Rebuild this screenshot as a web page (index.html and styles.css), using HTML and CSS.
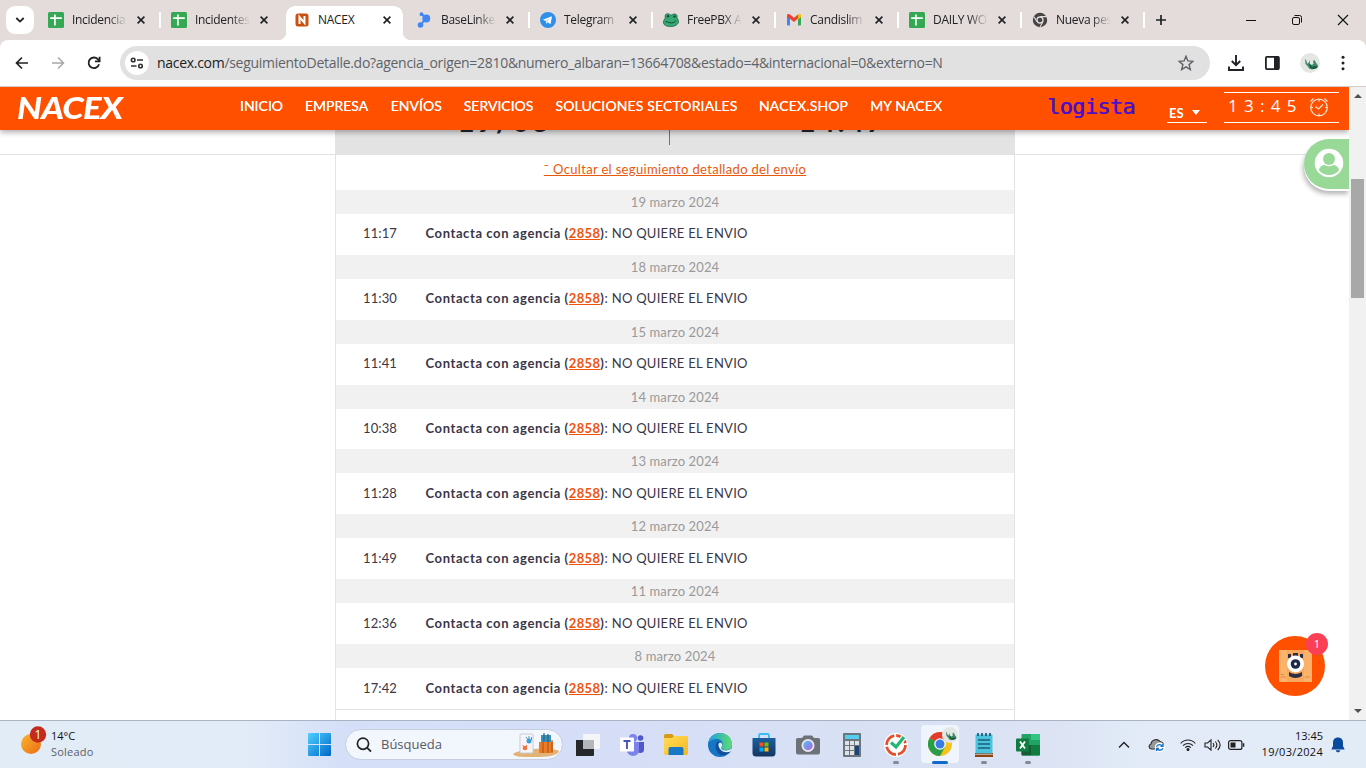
FILE: index.html
```html
<!DOCTYPE html>
<html lang="es">
<head>
<meta charset="utf-8">
<title>NACEX</title>
<link rel="stylesheet" href="styles.css">
</head>
<body>
<svg class="defs" width="0" height="0">
  <defs>
    <linearGradient id="gWin" x1="0" y1="0" x2="1" y2="1"><stop offset="0" stop-color="#4fd0ff"/><stop offset="1" stop-color="#0067c8"/></linearGradient>
    <linearGradient id="gSun" x1="0" y1="0" x2="1" y2="1"><stop offset="0" stop-color="#f7b733"/><stop offset="1" stop-color="#ee6a10"/></linearGradient>
    <linearGradient id="gEdge" x1="0" y1="0" x2="1" y2="0"><stop offset="0" stop-color="#1c9de0"/><stop offset="1" stop-color="#5fdc72"/></linearGradient>
    <linearGradient id="gFold" x1="0" y1="0" x2="1" y2="1"><stop offset="0" stop-color="#ffdc5c"/><stop offset="1" stop-color="#f6b91c"/></linearGradient>
    <linearGradient id="gStore" x1="0" y1="0" x2="0" y2="1"><stop offset="0" stop-color="#1c5fa0"/><stop offset="1" stop-color="#153560"/></linearGradient>
    <linearGradient id="gLens" x1="0" y1="0" x2="1" y2="1"><stop offset="0" stop-color="#4cc7f5"/><stop offset="1" stop-color="#b65be0"/></linearGradient>
    <symbol id="sheet" viewBox="0 0 16 16"><rect width="16" height="16" rx="1.5" fill="#34a853"/><path d="M2.2 6.2h11.6M6.9 2.5v11" stroke="#fff" stroke-width="1.7"/></symbol>
    <symbol id="close" viewBox="0 0 8 8"><path d="M.6.6l6.800 6.800M7.400.6L.6 7.400" stroke="#202124" stroke-width="1.600"/></symbol>
    <symbol id="gecko" viewBox="0 0 20 20"><circle cx="10" cy="10" r="10" fill="#e4e6e4"/><path d="M5 6l1 1 1.500 4L9 9l.5-2 .5 4 2 1 1.500-1.500L13 8l1.500-1 2 3.500 1.500 2-2 3-4 1-3-1-1.500-2.500L5.500 11z" fill="#3f8a68"/><path d="M9 11l1.500 4 2.500 1 4-1 1-2-2 .5-2-.5-2 1.500-1-2.500z" fill="#14583c"/></symbol>
  </defs>
</svg>
<div class="screen">
  <div class="tabstrip">
    <div class="tabsearch"><svg width="10" height="6" viewBox="0 0 10 6"><path d="M1.3 1l3.7 3.6L8.7 1" fill="none" stroke="#202124" stroke-width="1.8"/></svg></div>
    <div class="tabs">
      <div class="tab"><svg class="fav"><use href="#sheet"/></svg><span class="tt">Incidencias</span><svg class="x"><use href="#close"/></svg></div>
      <div class="tab nosep"><svg class="fav"><use href="#sheet"/></svg><span class="tt">Incidentes</span><svg class="x"><use href="#close"/></svg></div>
      <div class="tab active nosep"><svg class="fav" viewBox="0 0 16 16"><rect x="1.500" y="1.500" width="13" height="13" rx="2.500" fill="#c9500f"/><path d="M5.500 12V5L10.500 11V4" fill="none" stroke="#fff" stroke-width="2"/></svg><span class="tt">NACEX</span><svg class="x"><use href="#close"/></svg></div>
      <div class="tab"><svg class="fav" viewBox="0 0 16 16"><g fill="#4285f4"><circle cx="4.500" cy="2.200" r="1.900"/><circle cx="9.300" cy="6.500" r="3.900"/><circle cx="3.500" cy="13" r="2.800"/></g><path d="M4.500 2l4 4-4.500 7" fill="none" stroke="#4285f4" stroke-width="1.800"/></svg><span class="tt">BaseLinker</span><svg class="x"><use href="#close"/></svg></div>
      <div class="tab"><svg class="fav" viewBox="0 0 16 16"><circle cx="8" cy="8" r="8" fill="#2f8fe8"/><path d="M2.800 7.800L12 4.200l-1.500 8-2.700-2-1.500 1.500-.4-2.600z" fill="#fff"/><path d="M6 9l4-3-3 4z" fill="#9cc8f0"/></svg><span class="tt">Telegram</span><svg class="x"><use href="#close"/></svg></div>
      <div class="tab"><svg class="fav" viewBox="0 0 16 16"><path d="M.5 10C.5 8 2 7 2.300 5.500 1.500 3 3 1.500 5 1.800 6.500 2 7 3 8 3s2-1.300 4-1c2 .3 2.500 2 2 3.500L15.500 9c.5 2-2 5.500-7.500 5.500S.5 13 .5 10z" fill="#36a873" stroke="#23674a" stroke-width=".8"/><path d="M2.500 9.500c3 .5 4 1.500 6 1.500s3-1 4.500-2.500" fill="none" stroke="#174c37" stroke-width="1"/><circle cx="5" cy="4.300" r="1.200" fill="#174c37"/><circle cx="11.500" cy="4.500" r="1.200" fill="#174c37"/></svg><span class="tt">FreePBX Ad</span><svg class="x"><use href="#close"/></svg></div>
      <div class="tab"><svg class="fav" viewBox="0 0 16 16"><path d="M1 3.500h3V13.500H2a1 1 0 0 1-1-1z" fill="#4285f4"/><path d="M12 3.500h3v9a1 1 0 0 1-1 1h-2z" fill="#34a853"/><path d="M1 3.500C1 2 3 1.600 4 2.600l4 3.200 4-3.200v4L8 10 4 6.800 1 5z" fill="#ea4335"/><path d="M12 2.600c1-1 3-.6 3 .9V5l-3 2.500z" fill="#fbbc04"/></svg><span class="tt">Candislim </span><svg class="x"><use href="#close"/></svg></div>
      <div class="tab"><svg class="fav"><use href="#sheet"/></svg><span class="tt">DAILY WORK</span><svg class="x"><use href="#close"/></svg></div>
      <div class="tab"><svg class="fav" viewBox="0 0 16 16"><circle cx="8" cy="8" r="7.200" fill="#444"/><circle cx="8" cy="8" r="3" fill="#444" stroke="#e3dcda" stroke-width="1.300"/><path d="M8 4.600h6.500M5 9.800L2 4.800M11 9.600L8 15" stroke="#e3dcda" stroke-width="1.100"/></svg><span class="tt">Nueva pestaña</span><svg class="x"><use href="#close"/></svg></div>
    </div>
    <svg class="plus" width="12" height="12" viewBox="0 0 12 12"><path d="M6 1v10M1 6h10" stroke="#202124" stroke-width="1.700"/></svg>
    <div class="winctl">
      <svg width="12" height="12" viewBox="0 0 12 12"><path d="M1 6.500h10" stroke="#111"/></svg>
      <svg width="12" height="12" viewBox="0 0 12 12" fill="none" stroke="#111"><rect x="1.500" y="3.500" width="7" height="7" rx="1.500"/><path d="M3.500 1.500h5a2 2 0 0 1 2 2v5"/></svg>
      <svg width="12" height="12" viewBox="0 0 12 12"><path d="M1 1l10 10M11 1L1 11" stroke="#111" stroke-width="1.100"/></svg>
    </div>
  </div>

  <div class="toolbar">
    <div class="nav">
      <svg width="14" height="14" viewBox="0 0 14 14" fill="none" stroke="#202124" stroke-width="1.700"><path d="M13 7H2M7 1.500L1.500 7 7 12.500"/></svg>
      <svg width="14" height="14" viewBox="0 0 14 14" fill="none" stroke="#a8a8a8" stroke-width="1.500"><path d="M1 7h11M7 1.500L12.500 7 7 12.500"/></svg>
      <svg width="14" height="14" viewBox="0 0 14 14" fill="none" stroke="#202124" stroke-width="1.800"><path d="M12 8.200A5.300 5.300 0 1 1 10.800 3.200L12.500 5"/><path d="M12.600.8V5.300H8"/></svg>
    </div>
    <div class="omni">
      <span class="site"><svg width="14" height="12" viewBox="0 0 14 12" fill="none" stroke="#303134" stroke-width="1.600"><circle cx="3.200" cy="3" r="1.800"/><path d="M7 3h6M1 9h5.500"/><circle cx="10.500" cy="9" r="1.800"/></svg></span>
      <span class="url"><b>nacex.com</b>/seguimientoDetalle.do?agencia_origen=2810&amp;numero_albaran=13664708&amp;estado=4&amp;internacional=0&amp;externo=N</span>
      <svg class="star" width="16" height="16" viewBox="0 0 16 16"><path d="M8 1.200l1.900 4.700 5 .4-3.800 3.300 1.200 5L8 11.900l-4.300 2.700 1.200-5L1.100 6.300l5-.4z" fill="none" stroke="#5f6368" stroke-width="1.400"/></svg>
    </div>
    <div class="acts">
      <svg width="16" height="16" viewBox="0 0 16 16" fill="none" stroke="#202124" stroke-width="1.900"><path d="M8 0v10M3.800 6L8 10.200 12.200 6M1 11.500V15h14v-3.500"/></svg>
      <svg width="16" height="16" viewBox="0 0 16 16"><rect x="1.900" y="1.900" width="13" height="12.200" rx="1" fill="none" stroke="#202124" stroke-width="1.800"/><path d="M10 1.500h5v13h-5z" fill="#202124"/></svg>
      <svg width="20" height="20"><use href="#gecko"/></svg>
      <svg class="dots" width="4" height="16" viewBox="0 0 4 16" fill="#202124"><circle cx="2" cy="2.300" r="1.500"/><circle cx="2" cy="8" r="1.500"/><circle cx="2" cy="13.700" r="1.500"/></svg>
    </div>
  </div>

  <div class="view">
    <div class="page">
      <header class="site-head">
        <div class="brand"><span>NACEX</span></div>
        <nav class="menu"><a>INICIO</a><a>EMPRESA</a><a class="m3">ENVÍOS</a><a>SERVICIOS</a><a class="m5">SOLUCIONES SECTORIALES</a><a class="m6">NACEX.SHOP</a><a class="m7">MY NACEX</a></nav>
        <div class="logista">logista</div>
        <div class="lang">ES<i class="caret"></i></div>
        <div class="clock"><span>13:45</span><svg width="20" height="20" viewBox="0 0 20 20" fill="none" stroke="#ffe4d6" stroke-width="1.200"><circle cx="10" cy="10.500" r="8.300"/><path d="M6.500 9.500l3 2.500L14 7.500M10 2v2.500M10 16.500V19M2 10.500h2M16 10.500h2M1.500 4.500L4.500 1.500M15.500 1.500l3 3"/></svg></div>
      </header>
      <main class="content">
        <section class="card">
          <div class="summary"><div class="fig f1">19/03</div><div class="fig f2">14:47</div></div>
          <div class="toggle"><a>¯ Ocultar el seguimiento detallado del envío</a></div>
          <div class="day">19 marzo 2024</div><div class="ev"><time>11:17</time><p><b>Contacta con agencia (<a>2858</a>)</b>: <span>NO QUIERE EL ENVIO</span></p></div>
          <div class="day">18 marzo 2024</div><div class="ev"><time>11:30</time><p><b>Contacta con agencia (<a>2858</a>)</b>: <span>NO QUIERE EL ENVIO</span></p></div>
          <div class="day">15 marzo 2024</div><div class="ev"><time>11:41</time><p><b>Contacta con agencia (<a>2858</a>)</b>: <span>NO QUIERE EL ENVIO</span></p></div>
          <div class="day">14 marzo 2024</div><div class="ev"><time>10:38</time><p><b>Contacta con agencia (<a>2858</a>)</b>: <span>NO QUIERE EL ENVIO</span></p></div>
          <div class="day">13 marzo 2024</div><div class="ev"><time>11:28</time><p><b>Contacta con agencia (<a>2858</a>)</b>: <span>NO QUIERE EL ENVIO</span></p></div>
          <div class="day">12 marzo 2024</div><div class="ev"><time>11:49</time><p><b>Contacta con agencia (<a>2858</a>)</b>: <span>NO QUIERE EL ENVIO</span></p></div>
          <div class="day">11 marzo 2024</div><div class="ev"><time>12:36</time><p><b>Contacta con agencia (<a>2858</a>)</b>: <span>NO QUIERE EL ENVIO</span></p></div>
          <div class="day">8 marzo 2024</div><div class="ev last"><time>17:42</time><p><b>Contacta con agencia (<a>2858</a>)</b>: <span>NO QUIERE EL ENVIO</span></p></div>
        </section>
      </main>
      <div class="user"><svg width="30" height="30" viewBox="0 0 30 30"><circle cx="15" cy="15" r="14.300" fill="#fff"/><circle cx="15" cy="11" r="6" fill="#98d998"/><path d="M4.800 22c1-3.500 3.500-5 6-5 2.500 1.600 5.900 1.600 8.400 0 2.500 0 5 1.500 6 5-5 6.700-15.400 6.700-20.400 0z" fill="#98d998"/></svg></div>
      <div class="bot">
        <svg width="60" height="60" viewBox="0 0 60 60"><circle cx="30" cy="30" r="30" fill="#ff5000"/><rect x="14" y="14" width="33" height="32" rx="1.500" fill="#f8a75c"/><path d="M14 14h8v32h-8zM39 14h8v32h-8z" fill="#fbb36c"/><path d="M16 41h5M40 41h5M16 38.500h3" stroke="#d98a4a"/><path d="M23 18h3v4h-3zM28 17h5v4h-5zM35 18h3v4h-3z" fill="#2b2f45"/><circle cx="30.500" cy="28" r="8.500" fill="#fff"/><circle cx="30.500" cy="28" r="4.800" fill="#1e2a48"/><circle cx="30.500" cy="28" r="1.400" fill="#fff"/><path d="M24 36c4 2.500 9 2.500 13 0v4c-4 2.500-9 2.500-13 0z" fill="#2b2f45"/></svg>
        <span class="cnt">1</span>
      </div>
    </div>
    <div class="scroll"><i class="up"></i><div class="thumb"></div><i class="down"></i></div>
  </div>

  <footer class="taskbar">
    <div class="weather">
      <svg width="30" height="30" viewBox="0 0 30 30"><circle cx="11" cy="18" r="10" fill="url(#gSun)"/><circle cx="18" cy="8.500" r="8.200" fill="#c42b1c"/><text x="18" y="12.800" text-anchor="middle" class="wbadge">1</text></svg>
      <div class="wt"><span>14°C</span><small>Soleado</small></div>
    </div>
    <svg class="win" width="23" height="23" viewBox="0 0 23 23" fill="url(#gWin)"><path d="M0 1a1 1 0 0 1 1-1h10v11H0zM12 0h10a1 1 0 0 1 1 1v10H12zM0 12h11v11H1a1 1 0 0 1-1-1zM12 12h11v10a1 1 0 0 1-1 1H12z"/></svg>
    <div class="search">
      <svg width="16" height="16" viewBox="0 0 16 16" fill="none" stroke="#222" stroke-width="1.700"><circle cx="7" cy="6.700" r="5.600"/><path d="M11 10.700l4 4"/></svg>
      <span>Búsqueda</span>
      <svg class="deco" width="47" height="26" viewBox="0 0 47 26"><path d="M0 22c6-5 38-7 46-3-1 5-12 6-25 6S2 25 0 22z" fill="#e2b377"/><rect x="7" y="2" width="13" height="19" rx="1" fill="#f6f4f8" stroke="#c9cbd8"/><circle cx="16" cy="9" r="2.500" fill="#3f9fd0"/><path d="M13 5l2 3M16 4v4M18.500 5v3" stroke="#3f9fd0"/><circle cx="12" cy="16" r="2.300" fill="#f0743e"/><path d="M9.500 13l2 2M13.500 13v2" stroke="#f0743e"/><rect x="26" y="10" width="14" height="11" fill="#e97c24"/><rect x="28" y="3" width="10" height="7" fill="#3c8fb8"/><path d="M30 10v11M35 10v11M39 8v12" stroke="#b6561d" stroke-width="1.200"/><path d="M31 1v8M35 2v8" stroke="#28647f" stroke-width="1.200"/></svg>
    </div>
    <div class="apps">
      <div class="app"><svg width="24" height="24" viewBox="0 0 24 24"><path d="M0 7h18v15a1 1 0 0 1-1 1H0z" fill="#252729"/><path d="M7 1h17v15H7z" fill="#f4f5f7"/><path d="M7 7h11v9H7z" fill="#b4b6ba"/></svg></div>
      <div class="app"><svg width="24" height="24" viewBox="0 0 24 24"><circle cx="13" cy="5" r="4" fill="#7b83eb"/><circle cx="20.500" cy="5" r="2.800" fill="#5059c9"/><path d="M17 9h7v8c0 3-4 4-7 2z" fill="#5059c9"/><path d="M7 9h12v8c0 7-9 8-12 2z" fill="#7b83eb"/><rect y="4.500" width="14" height="14" rx="1" fill="#fff"/><path d="M3.500 8h7M7 8v8" stroke="#4b53bc" stroke-width="1.900"/></svg></div>
      <div class="app"><svg width="24" height="24" viewBox="0 0 24 24"><path d="M0 2.500A1.500 1.500 0 0 1 1.500 1H8l3 3v4H0z" fill="#d99a16"/><path d="M0 5h8l2-2h12.500A1.500 1.500 0 0 1 24 4.500v16a1.500 1.500 0 0 1-1.500 1.500h-21A1.500 1.500 0 0 1 0 20.500z" fill="url(#gFold)"/><path d="M4.500 22v-6a2 2 0 0 1 2-2h11a2 2 0 0 1 2 2v6z" fill="#1878c8"/></svg></div>
      <div class="app"><svg width="24" height="24" viewBox="0 0 24 24"><circle cx="12" cy="12" r="12" fill="#1675c4"/><path d="M0 11C1 4 6 0 12 0c7 0 12 5 12 11 0 4-3 6-6 6-3 0-5-1-4-3 2-5-1-8-5-8-4 0-8 2-9 5z" fill="url(#gEdge)"/><path d="M9 9c-3 4-1 11 4 13 4 1 8-1 10-4-4 2-9 1-10-2-.8-2 1-3 .5-5C13 9 11 8 9 9z" fill="#124f9c"/><path d="M11 10c3-1 4 2 2.500 4-.8 2 1 3.300 4 3.500 3 .1 5-1 6-3l-1 4c-3 1-7 1-9-1-2-1.700-4-5-2.500-7.500z" fill="#e6f2f8"/></svg></div>
      <div class="app"><svg width="24" height="24" viewBox="0 0 24 24"><path d="M7 6V2.500A1.500 1.500 0 0 1 8.500 1h7A1.500 1.500 0 0 1 17 2.500V6" fill="none" stroke="#37bdf0" stroke-width="1.800"/><path d="M.5 5h23v15a3.500 3.500 0 0 1-3.500 3.500H4A3.500 3.500 0 0 1 .5 20z" fill="url(#gStore)"/><path d="M7.500 9.500h4v4h-4z" fill="#f25022"/><path d="M12.500 9.500h4v4h-4z" fill="#7fba00"/><path d="M7.500 14.500h4v4h-4z" fill="#00a4ef"/><path d="M12.500 14.500h4v4h-4z" fill="#ffb900"/></svg></div>
      <div class="app"><svg width="24" height="24" viewBox="0 0 24 24"><path d="M0 6.500A1.500 1.500 0 0 1 1.500 5H6l2-2.500h8L18 5h4.500A1.500 1.500 0 0 1 24 6.500v13a2 2 0 0 1-2 2H2a2 2 0 0 1-2-2z" fill="#6d7278"/><circle cx="12" cy="12.500" r="6.500" fill="#e8e9ee"/><circle cx="12" cy="12.500" r="4.700" fill="url(#gLens)"/></svg></div>
      <div class="app"><svg width="24" height="24" viewBox="0 0 24 24"><rect x="3" width="18" height="24" rx="1" fill="#6c757c"/><rect x="5" y="2" width="14" height="4" fill="#56cdf0"/><path d="M5 8h4v4H5zM10 8h4v4h-4zM15 8h4v4h-4zM5 13h4v4H5zM10 13h4v4h-4zM5 18h4v4H5zM10 18h4v4h-4z" fill="#dce2e6"/><path d="M15 13h4v9h-4z" fill="#1a4480"/></svg></div>
      <div class="app run"><svg width="24" height="24" viewBox="0 0 24 24"><circle cx="12" cy="12" r="12" fill="#fff"/><circle cx="12" cy="12" r="9.500" fill="none" stroke="#e2502d" stroke-width="2.800" stroke-dasharray="12.900 2"/><path d="M7 9.500l5 4.500 8-10" fill="none" stroke="#fff" stroke-width="5.500"/><path d="M7 9.500l5 4.500 8-10" fill="none" stroke="#23b573" stroke-width="3.200"/></svg></div>
      <div class="app run on"><svg width="30" height="30" viewBox="0 0 30 30"><circle cx="12" cy="17" r="12" fill="#f6c21c"/><path d="M12 17L1.600 11A12 12 0 0 1 22.400 11z" fill="#e33b2e"/><path d="M12 17L1.600 11A12 12 0 0 0 12 29l5-9z" fill="#2a9d4a"/><circle cx="12" cy="17" r="5.800" fill="#fff"/><circle cx="12" cy="17" r="4.500" fill="#3a7be8"/><svg x="14" y="0" width="16" height="16"><use href="#gecko"/></svg></svg></div>
      <div class="app run"><svg width="24" height="24" viewBox="0 0 24 24"><path d="M3 20h18v4H3z" fill="#8a4415"/><path d="M3 21.500h18V22H3z" fill="#fff"/><rect x="3.500" y="1.500" width="17" height="19" rx="1" fill="#4cc3dc"/><path d="M6 0v3M10 0v3M14 0v3M18 0v3" stroke="#194c68" stroke-width="1.600"/><path d="M6 7h12M6 11h12M6 15h12" stroke="#185f78" stroke-width="1.300"/></svg></div>
      <div class="app run"><svg width="24" height="24" viewBox="0 0 24 24"><rect x="5.500" y="1" width="18.500" height="21.500" rx="1" fill="#21a366"/><path d="M15 1h8a1 1 0 0 1 1 1v5h-9z" fill="#33c481"/><path d="M5.500 12H15v10.500H6.500a1 1 0 0 1-1-1z" fill="#185c37"/><path d="M15 12h9v9.500a1 1 0 0 1-1 1h-8z" fill="#107c41"/><rect y="5.500" width="13" height="13" rx="1" fill="#107c41"/><path d="M4 8.500l5 7M9 8.500l-5 7" stroke="#fff" stroke-width="1.800"/></svg></div>
    </div>
    <div class="tray">
      <svg width="12" height="8" viewBox="0 0 12 8"><path d="M1 6.500l5-5 5 5" fill="none" stroke="#222" stroke-width="1.400"/></svg>
      <svg class="cloud" width="17" height="14" viewBox="0 0 17 14"><path d="M3.500 11C.5 10.500.3 7 3 6 3.500 1.500 9.500 0 12 3.500c3 .3 4 3 3 5.500L9 11z" fill="#999" stroke="#333" stroke-width="1.200"/><circle cx="11.700" cy="9.500" r="5" fill="#fff"/><path d="M8.500 8.700c1-2.500 4.500-2.800 5.800-.5M14.900 6v2.400h-2.400M14.900 10.300c-1 2.300-4.500 2.600-5.800.3M8.600 13v-2.600H11" fill="none" stroke="#1570c8" stroke-width="1.400"/></svg>
      <svg class="wifi" width="16" height="12" viewBox="0 0 16 12" fill="none" stroke="#222" stroke-width="1.100"><path d="M.7 4.500c4-4.600 10.600-4.600 14.600 0M3 6.700c3-3 7-3 10 0M5.200 8.700c1.700-1.600 3.900-1.600 5.600 0"/><circle cx="8" cy="10.500" r="1" fill="#222"/></svg>
      <svg class="vol" width="17" height="14" viewBox="0 0 17 14" fill="none" stroke="#222" stroke-width="1.100"><path d="M1 5h2.500L7 2v10L3.500 9H1zM9 5c1 1.200 1 2.800 0 4M11.300 3.500c2 2.200 2 4.800 0 7M13.700 1.800c3 3.200 3 7.200 0 10.400"/></svg>
      <svg class="bat" width="17" height="10" viewBox="0 0 17 10"><rect x=".6" y=".6" width="13.300" height="8.800" rx="2" fill="none" stroke="#222" stroke-width="1.200"/><path d="M2.500 2.500h5v5h-5zM14.800 3.200h1.500v3.600h-1.500z" fill="#222"/></svg>
      <div class="dt"><span>13:45</span><span class="d2">19/03/2024</span></div>
      <svg class="bell" width="14" height="16" viewBox="0 0 14 16"><path d="M7 .5c3.300 0 5 2.300 5 5V9l1.700 3.500H.3L2 9V5.500C2 2.800 3.700.5 7 .5zM4.800 13.300h4.400C9 14.700 8 15.300 7 15.300s-2-.6-2.200-2z" fill="#0a4a9e"/></svg>
    </div>
  </footer>
</div>
</body>
</html>
```
FILE: styles.css
```css
* { box-sizing: border-box; }
body { margin: 0; font-family: "Open Sans", "Noto Sans", sans-serif; }
.defs { position: absolute; }
svg { display: block; flex: none; }
.screen { width: 1366px; height: 768px; display: flex; flex-direction: column; overflow: hidden; background: #e3dcda; }

.tabstrip { height: 40px; display: flex; align-items: center; }
.tabsearch { width: 28px; height: 28px; margin: 0 6px; border-radius: 9px; background: #fff; display: flex; align-items: center; justify-content: center; }
.tabs { display: flex; align-self: stretch; }
.tab { width: 123px; height: 40px; padding-left: 8px; display: flex; align-items: center; position: relative; }
.tab::after { content: ""; position: absolute; right: 2px; top: 12px; width: 2px; height: 16px; background: #fff; }
.tab.nosep::after { display: none; }
.fav { width: 16px; height: 16px; }
.tt { width: 55px; margin-left: 8px; overflow: hidden; white-space: nowrap; font-size: 12px; line-height: 18px; letter-spacing: -.3px; color: #202124; -webkit-mask-image: linear-gradient(90deg, #000 65%, transparent); mask-image: linear-gradient(90deg, #000 65%, transparent); }
.tab.active .tt { -webkit-mask-image: none; mask-image: none; }
.x { width: 8px; height: 8px; margin-left: 10px; }
.tab.active::before { content: ""; position: absolute; left: -8px; top: 6px; width: 133px; height: 34px; background: radial-gradient(circle at 0 0, transparent 8px, #fff 8.500px) 0 100% / 8px 8px no-repeat, radial-gradient(circle at 100% 0, transparent 8px, #fff 8.500px) 100% 100% / 8px 8px no-repeat, radial-gradient(circle at 100% 100%, #fff 8.500px, transparent 9px) 8px 0 / 9px 9px no-repeat, radial-gradient(circle at 0 100%, #fff 8.500px, transparent 9px) 116px 0 / 9px 9px no-repeat, linear-gradient(#fff, #fff) 17px 0 / 99px 34px no-repeat, linear-gradient(#fff, #fff) 8px 9px / 117px 25px no-repeat; z-index: 0; }
.tab.active > * { position: relative; z-index: 1; }
.plus { margin-left: 8px; }
.winctl { display: flex; gap: 34px; margin-left: auto; padding-right: 17px; }

.toolbar { height: 47px; background: #fff; border-radius: 8px 8px 0 0; border-bottom: 1px solid #d5cdca; display: flex; align-items: center; padding-left: 15px; }
.nav { display: flex; gap: 22px; width: 105px; }
.omni { width: 1090px; height: 34px; border-radius: 17px; background: #e1e1e1; display: flex; align-items: center; padding-left: 5px; }
.site { width: 24px; height: 24px; border-radius: 50%; background: #fff; display: flex; align-items: center; justify-content: center; }
.url { margin-left: 8px; margin-top: -1px; font-size: 14px; letter-spacing: -.295px; color: #5f6368; white-space: nowrap; }
.url b { font-weight: 400; color: #202124; }
.star { margin-left: auto; margin-right: 16px; }
.acts { display: flex; align-items: center; margin-left: 18px; gap: 20px; }
.acts .dots { margin-left: 1px; }

.view { height: 633px; display: flex; }
.page { width: 1349px; background: #fff; position: relative; overflow: hidden; color: #3a3647; font-family: Lato, "Open Sans", sans-serif; }
.site-head { height: 43px; background: #ff5000; display: flex; position: relative; z-index: 3; box-shadow: 0 2px 6px rgba(0,0,0,.35); color: #fff; }
.brand { width: 240px; padding-left: 17px; font: italic 900 31px/41px Lato, sans-serif; letter-spacing: -.7px; }
.brand span { display: inline-block; transform: scaleX(1.12); transform-origin: 0 50%; }
.menu { display: flex; width: 808px; gap: 22px; font-size: 14px; line-height: 38px; font-weight: 400; white-space: nowrap; text-shadow: 0 0 .5px #fff; }
.m3 { margin-left: .5px; }
.m5 { letter-spacing: .13px; }
.m6 { letter-spacing: .15px; margin-left: -.5px; }
.m7 { letter-spacing: .1px; }
.logista { width: 120px; color: #4a0fc8; font: 500 22px/40px "DejaVu Sans Mono", monospace; letter-spacing: -.7px; text-shadow: .5px 0 #4a0fc8; margin-left: -1px; }
.lang { width: 40px; height: 19px; margin: 17px 0 0; border-bottom: 1px solid #fff; font-size: 13px; line-height: 16px; padding: 0 0 1px 2px; font-weight: 700; display: flex; align-items: center; }
.caret { border: 4px solid transparent; border-top: 5px solid #fff; border-bottom: 0; margin-left: 8px; }
.clock { width: 115px; height: 31px; margin: 5px 0 0 17px; border-top: 1px solid #fff; border-bottom: 1px solid #fff; display: flex; padding: 4px 0 0 4px; }
.clock span { width: 81px; margin-top: -2px; font: 17px/22px "Open Sans", sans-serif; letter-spacing: 6.300px; white-space: nowrap; }

.content { height: 590px; background: linear-gradient(#e3e3e3, #e3e3e3) 0 24px / 100% 1px no-repeat; }
.card { width: 680px; height: 590px; margin-left: 335px; background: #fff; border: solid #e3e3e3; border-width: 0 1px; }
.summary { height: 25px; background: #e3e3e3; margin-left: -1px; display: grid; grid-template-columns: 335px 1fr; }
.fig { margin-top: -25px; height: 40px; font: 700 30px/30px Lato, sans-serif; text-align: center; color: #262431; letter-spacing: 2px; }
.f1 { border-right: 1px solid #6f7378; padding-left: 4px; }
.toggle { height: 35px; text-align: center; font-size: 13px; line-height: 29px; }
.toggle a { color: #e8590c; text-decoration: underline; letter-spacing: .33px; }
.day { height: 24px; background: #f1f1f1; color: #999; text-align: center; font-size: 13px; line-height: 24px; letter-spacing: .12px; }
.ev { height: 40.860px; display: flex; align-items: center; padding: 0 0 2px 27px; font-size: 13px; line-height: 20px; }
.ev.last { height: 42px; border-bottom: 1px solid #e3e3e3; }
.ev time { width: 62.500px; letter-spacing: .1px; }
.ev p { margin: 0; white-space: nowrap; letter-spacing: .3px; }
.ev b { letter-spacing: .6px; }
.ev b a { color: #f0540e; text-decoration: underline; letter-spacing: .35px; }
.ev span { letter-spacing: .27px; }

.user { position: absolute; right: 0; top: 52px; width: 45px; height: 50px; border-radius: 25px 0 0 25px; background: #98d998; box-shadow: 0 2px 0 #fff, -1px 5px 5px rgba(0,0,0,.3); padding: 9px 0 0 10px; }
.bot { position: absolute; left: 1265px; top: 549px; }
.cnt { position: absolute; left: 41px; top: -3px; width: 22px; height: 22px; border-radius: 50%; background: #fb4056; color: #fff; font: 11px/22px "Open Sans", sans-serif; text-align: center; }
.scroll { width: 17px; background: #f1f1f1; display: flex; flex-direction: column; align-items: center; }
.scroll i { border: 4px solid transparent; }
.scroll .up { border-top: 0; border-bottom-color: #505050; margin-top: 7px; }
.thumb { width: 13px; height: 119px; margin-top: 81px; background: #a8a8a8; }
.scroll .down { border-bottom: 0; border-top-color: #505050; margin-top: auto; margin-bottom: 7px; }

.taskbar { height: 48px; border-top: 1px solid #aab3c4; background: linear-gradient(90deg, #e1ecf7 0, #e2ecf8 18%, #d5e0f8 25%, #d6def7 45%, #d8e1f4 62%, #dbe3f4 76%, #e2ebf7 84%, #e2ecf7); display: flex; align-items: center; }
.weather { width: 308px; padding-left: 20px; display: flex; align-items: center; }
.weather svg { margin-top: -7px; }
.wbadge { fill: #fff; font: 12px "Open Sans", sans-serif; }
.wt { display: flex; flex-direction: column; margin-top: -2px; padding-left: 1px; font-size: 11px; line-height: 16px; color: #111; }
.wt small { font-size: 11px; letter-spacing: .2px; color: #5b6168; }
.win { margin-right: 14px; }
.search { width: 218px; height: 31px; border: 1px solid #c6cddf; border-radius: 16px; background: #f2f6fd; display: flex; align-items: center; padding-left: 10px; font-size: 13px; color: #565b64; }
.search span { margin: -2px 0 0 9px; }
.deco { margin-left: auto; margin-right: 2px; }
.apps { display: flex; margin-left: 3px; }
.app { width: 44px; height: 47px; display: flex; align-items: center; justify-content: center; position: relative; }
.run::after { content: ""; position: absolute; left: 19px; bottom: 4px; width: 6px; height: 3px; border-radius: 2px; background: #858b94; }
.on::before { content: ""; position: absolute; left: 3px; top: 4px; width: 38px; height: 38px; border-radius: 4px; background: #f0f4fc; }
.on svg { position: relative; margin: -5px 0 0 5px; }
.on::after { left: 14px; width: 16px; background: #0f6cc8; }
.tray { margin-left: auto; padding-right: 21px; display: flex; align-items: center; }
.cloud { margin-left: 18px; }
.wifi { margin-left: 15px; }
.vol { margin-left: 8px; }
.bat { margin-left: 7px; }
.dt { width: 78px; display: flex; flex-direction: column; align-items: flex-end; margin-top: -2px; font-size: 11px; line-height: 16px; color: #111; }
.dt .d2 { letter-spacing: .3px; }
.bell { margin-left: 8px; }
```
